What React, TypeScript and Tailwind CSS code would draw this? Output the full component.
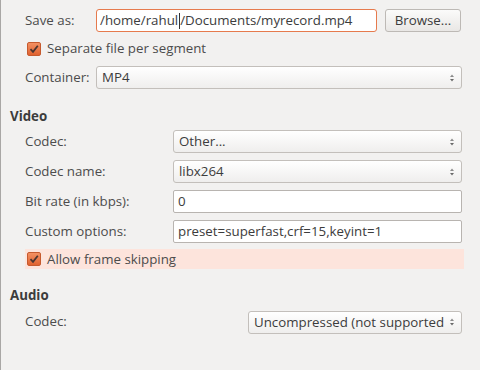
import React from "react";

const font = { fontFamily: '"Open Sans", "Noto Sans", sans-serif' };

function Check() {
  return (
    <span className="flex h-[14px] w-[14px] shrink-0 items-center justify-center rounded-[2px] border border-[#c65a2e] bg-gradient-to-b from-[#f29062] to-[#e0622f]">
      <svg width="10" height="10" viewBox="0 0 10 10">
        <path d="M1.5 5.2 L4 7.8 L8.8 1.8" fill="none" stroke="#4a3530" strokeWidth="1.8" />
      </svg>
    </span>
  );
}

function Arrows() {
  return (
    <svg width="6" height="12" viewBox="0 0 6 12" className="shrink-0">
      <path d="M3 2.5 L5 5 L1 5 Z" fill="#8a8a8a" />
      <path d="M3 9.5 L5 7 L1 7 Z" fill="#6a6a6a" />
    </svg>
  );
}

function Combo({ value, className }: { value: string; className: string }) {
  return (
    <div
      className={`flex h-[23px] items-center rounded-[3px] border border-[#c3bfbb] bg-gradient-to-b from-white to-[#efeeed] pl-[5px] pr-[6px] text-[#3c3c3c] ${className}`}
    >
      <span className="flex-1 overflow-hidden whitespace-nowrap leading-[21px]">{value}</span>
      <Arrows />
    </div>
  );
}

function Field({ value }: { value: string }) {
  return (
    <div className="flex h-[23px] items-center rounded-[2px] border border-[#b8b4b0] bg-white pl-[4px] text-[#3c3c3c]">
      {value}
    </div>
  );
}

export default function App() {
  return (
    <div
      style={font}
      className="flex h-[370px] w-[480px] flex-col border-l border-[#a9a7a5] bg-[#f2f1f0] text-[13.3px] leading-none text-[#4c4c4c]"
    >
      <div className="mt-[9px] flex items-center pl-[24px]">
        <span className="w-[71px]">Save as:</span>
        <div className="flex h-[23px] w-[281px] items-center rounded-[3px] border border-[#e67a4d] bg-white pl-[3px] text-[#3c3c3c]">
          /home/rahul
          <span className="mx-[0.5px] inline-block h-[16px] w-px bg-[#333]" />
          /Documents/myrecord.mp4
        </div>
        <button className="ml-[8px] flex h-[23px] w-[76px] items-center justify-center rounded-[3px] border border-[#bdb9b5] bg-gradient-to-b from-[#fbfbfa] to-[#e9e7e5] text-[#3c3c3c]">
          Browse...
        </button>
      </div>

      <div className="mt-[10px] flex items-center gap-[6px] pl-[26px]">
        <Check />
        <span>Separate file per segment</span>
      </div>

      <div className="mt-[10px] flex items-center pl-[24px]">
        <span className="w-[71px]">Container:</span>
        <Combo value="MP4" className="w-[366px]" />
      </div>

      <div className="mt-[21px] pl-[9px] font-bold text-[#3c3c3c]">Video</div>

      <div className="mt-[7px] grid grid-cols-[148px_289px] gap-y-[7px] pl-[24px]">
        <span className="self-center">Codec:</span>
        <Combo value="Other..." className="" />
        <span className="self-center">Codec name:</span>
        <Combo value="libx264" className="" />
        <span className="self-center">Bit rate (in kbps):</span>
        <Field value="0" />
        <span className="self-center">Custom options:</span>
        <Field value="preset=superfast,crf=15,keyint=1" />
      </div>

      <div className="ml-[24px] mt-[6px] flex h-[20px] w-[439px] items-center gap-[6px] bg-[#fde4dc] pl-[2px]">
        <Check />
        <span>Allow frame skipping</span>
      </div>

      <div className="mt-[20px] pl-[9px] font-bold text-[#3c3c3c]">Audio</div>

      <div className="mt-[8px] flex items-center pl-[24px]">
        <span className="w-[223px]">Codec:</span>
        <Combo value="Uncompressed (not supported" className="w-[214px]" />
      </div>
    </div>
  );
}
